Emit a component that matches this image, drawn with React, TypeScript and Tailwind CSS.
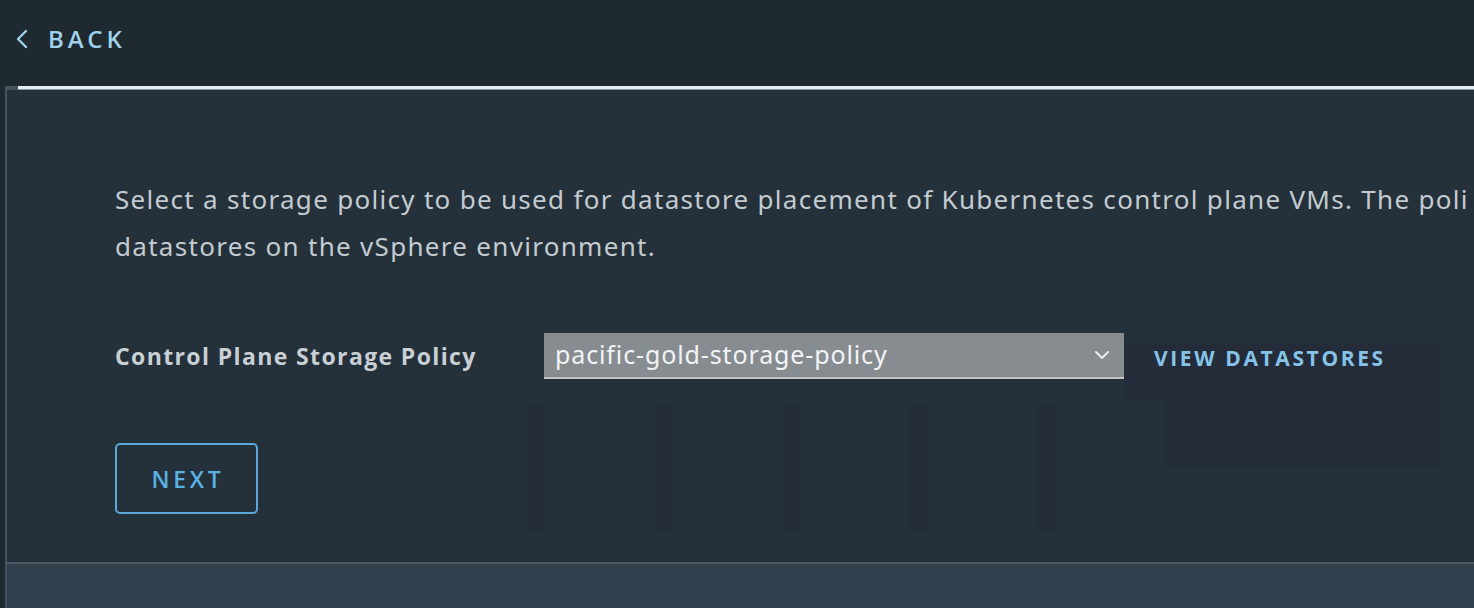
import React from 'react';

const ghostBars = [527, 655, 783, 910, 1038];

const App: React.FC = () => {
  return (
    <div className="w-[1474px] h-[608px] overflow-hidden bg-[#1f2930] flex flex-col font-['Noto_Sans',sans-serif]">
      {/* header */}
      <div className="h-[86px] shrink-0 flex items-center pl-[14px] pb-[8px]">
        <button className="flex items-center gap-[18px] text-[#9fd2ea]">
          <svg width="16" height="22" viewBox="0 0 16 22" fill="none">
            <path d="M12 3 L4 11 L12 19" stroke="currentColor" strokeWidth="2.4" strokeLinecap="round" strokeLinejoin="round" />
          </svg>
          <span className="text-[24px] font-semibold tracking-[0.16em] font-['Open_Sans',sans-serif]">BACK</span>
        </button>
      </div>

      {/* panel */}
      <div className="flex-1 flex flex-col ml-[5px] border-l-2 border-[#47525c]">
        <div className="h-[4px] shrink-0 flex">
          <div className="w-[11px] bg-[#47525c]"></div>
          <div className="flex-1 bg-[#e7edf1] border-b border-[#8a98a2]"></div>
        </div>
        <div className="relative flex-1 bg-[#25313a] pl-[108px] pt-[86px]">
          {/* faint placeholder shapes */}
          {ghostBars.map((x) => (
            <div key={x} className="absolute top-[315px] w-[18px] h-[127px] bg-[#232c38]" style={{ left: x - 7 }}></div>
          ))}
          <div className="absolute left-[1118px] top-[253px] w-[315px] h-[57px] bg-[#232c38]"></div>
          <div className="absolute left-[1158px] top-[310px] w-[275px] h-[68px] bg-[#232c38]"></div>

          <div className="relative">
            <p className="text-[26px] leading-[47px] tracking-[0.05em] text-[#c3cbd1] whitespace-nowrap">
              Select a storage policy to be used for datastore placement of Kubernetes control plane VMs. The poli
              <br />
              datastores on the vSphere environment.
            </p>

            <div className="mt-[63px] flex items-center">
              <label className="w-[429px] text-[23px] font-bold tracking-[0.06em] text-[#c9d0d5] font-['Open_Sans',sans-serif]">
                Control Plane Storage Policy
              </label>
              <div className="w-[580px] h-[46px] bg-[#878c90] border-b-2 border-[#c0c5c8] flex items-center justify-between pl-[11px] pr-[14px]">
                <span className="text-[25px] tracking-[0.035em] text-[#f2f4f6]">pacific-gold-storage-policy</span>
                <svg width="16" height="10" viewBox="0 0 16 10" fill="none">
                  <path d="M2 2 L8 8 L14 2" stroke="#e9edef" strokeWidth="2" strokeLinecap="round" strokeLinejoin="round" />
                </svg>
              </div>
              <button className="ml-[30px] pt-[6px] text-[21px] font-bold tracking-[0.125em] text-[#86c3e8] font-['Open_Sans',sans-serif]">
                VIEW DATASTORES
              </button>
            </div>

            <button className="mt-[64px] w-[143px] h-[71px] pt-[1px] pl-[3px] rounded-[5px] border-2 border-[#5aa8d8] text-[23px] font-semibold tracking-[0.16em] text-[#5bb0e2] font-['Open_Sans',sans-serif]">
              NEXT
            </button>
          </div>
        </div>
        <div className="h-[46px] shrink-0 bg-[#2f3f4b] border-t-2 border-[#4a5b67]"></div>
      </div>
    </div>
  );
};

export default App;
